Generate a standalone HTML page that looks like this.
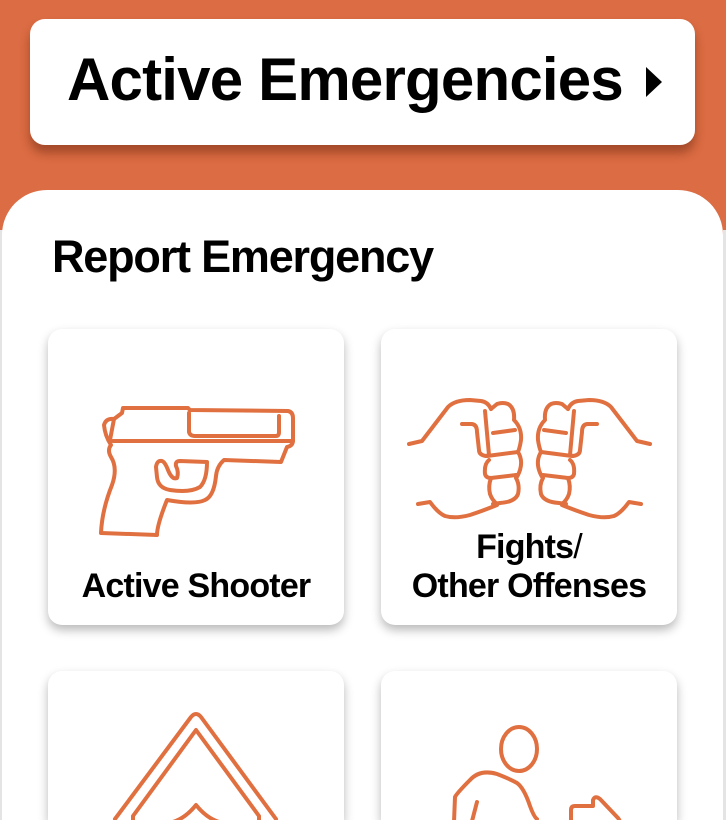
<!DOCTYPE html>
<html style="width:726px;height:820px;overflow:hidden"><head><style>
html,body{margin:0;padding:0;}
body{width:726px;height:820px;overflow:hidden;position:relative;background:#dc6c43;font-family:"Liberation Sans",sans-serif;font-weight:bold;color:#000;}
.side{position:absolute;top:230px;height:590px;width:3px;background:#e4e4e4;z-index:0;}
.top{position:absolute;left:30px;top:19px;width:665px;height:126px;background:#fff;border-radius:15px;box-shadow:0 8px 10px rgba(90,30,10,.45);}
.top h1{position:absolute;left:37px;top:31px;margin:0;font-size:60px;line-height:60px;letter-spacing:-0.8px;}
.tri{position:absolute;left:616px;top:48px;width:0;height:0;border-left:16px solid #000;border-top:15px solid transparent;border-bottom:15px solid transparent;}
.panel{position:absolute;left:2px;top:190px;width:721px;height:630px;background:#fff;border-radius:45px 45px 0 0;z-index:1;}
.rep{position:absolute;left:52px;top:233px;font-size:45px;line-height:48px;letter-spacing:-1.2px;margin:0;z-index:2;}
.card{position:absolute;width:296px;height:296px;background:#fff;border-radius:14px;box-shadow:0 5px 10px rgba(0,0,0,.28);z-index:2;}
.lbl{position:absolute;left:-10px;right:-10px;text-align:center;font-size:34px;line-height:39px;letter-spacing:-0.8px;}
svg{position:absolute;left:0;top:0;z-index:3;}
</style></head><body>
<div class="side" style="left:0"></div><div class="side" style="right:0"></div>
<div class="top"><h1>Active Emergencies</h1><div class="tri"></div></div>
<div class="panel"></div>
<h2 class="rep">Report Emergency</h2>
<div class="card" style="left:48px;top:329px"><div class="lbl" style="top:238px">Active Shooter</div></div>
<div class="card" style="left:381px;top:329px"><div class="lbl" style="top:199px">Fights<span style="font-weight:normal">/</span><br>Other Offenses</div></div>
<div class="card" style="left:48px;top:671px;height:149px;border-radius:14px 14px 0 0"></div>
<div class="card" style="left:381px;top:671px;height:149px;border-radius:14px 14px 0 0"></div>
<svg width="726" height="820" viewBox="0 0 726 820" fill="none" stroke="#e07040" stroke-width="4" stroke-linejoin="round" stroke-linecap="round">
<path d="M122,413 L123,408 L188,408 L190,410 L288,411 Q293,412 293,418 L293,440 Q293,446 287,447 L281,462 L224,460 Q217,466 216,476 Q214,496 205,500 Q195,505 167,500 Q157,525 157,535 L101,533 Q102,510 112,485 Q118,468 111,457 Q107,450 111,445 Q105,436 104,425 Q106,418 114,419 L122,413 Z"/>
<path d="M113,441 L293,441"/>
<path d="M114,419 L110,440"/>
<path d="M189,413 L189,432 Q190,436 195,436 L276,436 Q279,436 279,432 L279,416"/>
<path d="M207,462 Q207,480 200,487 Q190,493 170,490 Q158,488 157,477 L156,467 Q157,460 162,461 Q165,462 168,470 Q172,480 177,478 Q179,472 176,466 Q175,461 180,461 Z"/>
<g id="fist">
<path d="M409,444 L422,441 L448,407 Q455,400 470,400 L481,401 Q488,402 491,409"/>
<path d="M491,409 L497,404 Q503,402 508,404 Q515,408 514,420 Q522,428 521,440 Q520,447 518,452 Q523,460 520,470 Q518,476 516,478 Q520,485 518,494 Q515,502 500,503 L493,504"/>
<path d="M462,424 L471,424 Q477,424 477,432 L479,450 Q479,455 486,456 L489,455 L485,411"/>
<path d="M493,433 L515,430"/>
<path d="M487,456 L518,452"/>
<path d="M489,460 Q484,464 485,474 Q486,478 491,478 L516,475"/>
<path d="M491,478 Q488,486 490,494 Q492,500 497,504"/>
<path d="M418,504 L430,502 Q438,513 445,516 Q455,519 470,515 Q485,510 497,505"/>
</g>
<use href="#fist" transform="translate(1059,0) scale(-1,1)"/>
<path d="M115,819 L191,717 Q196,711 201,717 L276,819"/>
<path d="M133,822 L133,816 L196,730 L259,816 L259,822"/>
<path d="M169,823 Q184,820 196,805 Q208,820 223,823"/>
<ellipse cx="519" cy="749" rx="18" ry="22"/>
<path d="M454,822 L455,797 Q457,793 470,780 Q480,769 497,774 Q510,779 517,783 Q524,788 530,806 Q534,817 537,819"/>
<path d="M477,802 L465,848"/>
<path d="M571,810 Q571,806 575,806 L593,806 L593,800 Q595,795 600,799 L618,818 Q622,823 618,828 L600,847 Q595,851 593,846 L593,839 L575,839 Q571,839 571,835 Z"/>
</svg>
</body></html>
